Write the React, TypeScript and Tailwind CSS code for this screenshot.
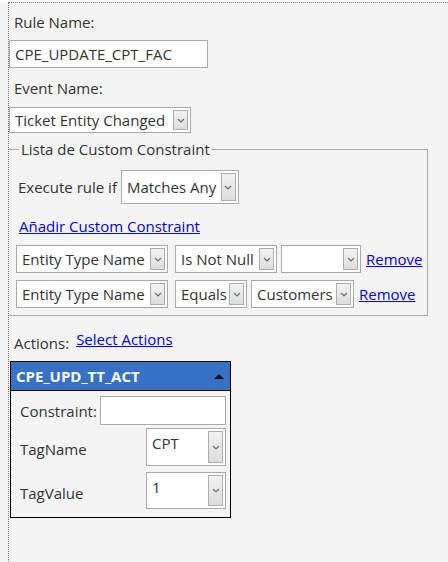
import type { ReactNode } from "react";

// small chevron used inside the fake select boxes
function Chevron() {
  return (
    <svg width="8" height="5" viewBox="0 0 8 5" className="block">
      <polyline points="1,1 4,4 7,1" fill="none" stroke="#6b6b6b" strokeWidth="1.2" />
    </svg>
  );
}

function Select({ value, className, top }: { value: string; className: string; top?: boolean }) {
  return (
    <div className={`flex bg-white border border-[#a9a9a9] ${className}`}>
      <div className={`flex-1 pl-[5px] text-[#333] whitespace-nowrap overflow-hidden flex ${top ? "items-start pt-[4px]" : "items-center"}`}>
        {value}
      </div>
      <div className="p-[2px] flex">
        <div className="w-[15px] border border-[#adadad] bg-gradient-to-b from-[#f2f2f2] to-[#dddddd] flex items-center justify-center">
          <Chevron />
        </div>
      </div>
    </div>
  );
}

function Link({ children, className = "" }: { children: ReactNode; className?: string }) {
  return <a className={`text-[#0000ee] underline cursor-pointer ${className}`}>{children}</a>;
}

export default function App() {
  return (
    <div className="min-h-screen w-full bg-[#f4f4f4] text-[15px] leading-[20px] text-[#333] font-['Open_Sans','Noto_Sans',sans-serif]">
      <div className="ml-2 mt-[2px] border-l border-t border-dotted border-[#7a7a7a] min-h-[560px] pt-[9px]">
        <div className="pl-[5px]">Rule Name:</div>
        <div className="mt-[8px] h-[28px] w-[199px] bg-white border border-[#a9a9a9] flex items-center pl-[5px]">
          CPE_UPDATE_CPT_FAC
        </div>
        <div className="mt-[10px] pl-[5px]">Event Name:</div>
        <Select value="Ticket Entity Changed" className="mt-[9px] h-[26px] w-[182px]" />

        <fieldset className="mt-[6px] w-[419px] border border-l-0 border-[#aaa] pb-[7px]">
          <legend className="ml-[10px] px-[2px]">Lista de Custom Constraint</legend>
          <div className="pt-[11px] pl-[9px] flex items-center gap-[4px]">
            <span>Execute rule if</span>
            <Select value="Matches Any" className="h-[34px] w-[118px]" />
          </div>
          <div className="mt-[12px] pl-[10px]">
            <Link>Añadir Custom Constraint</Link>
          </div>
          <div className="mt-[9px] pl-[7px] flex items-center">
            <Select value="Entity Type Name" className="h-[28px] w-[152px]" />
            <Select value="Is Not Null" className="ml-[7px] h-[28px] w-[102px]" />
            <Select value="" className="ml-[4px] h-[28px] w-[80px]" />
            <Link className="ml-[5px]">Remove</Link>
          </div>
          <div className="mt-[7px] pl-[7px] flex items-center">
            <Select value="Entity Type Name" className="h-[28px] w-[152px]" />
            <Select value="Equals" className="ml-[7px] h-[28px] w-[72px]" />
            <Select value="Customers" className="ml-[4px] h-[28px] w-[103px]" />
            <Link className="ml-[5px]">Remove</Link>
          </div>
        </fieldset>

        <div className="mt-[16px] pl-[5px] flex items-start gap-[7px]">
          <span className="pt-[1px]">Actions:</span>
          <span className="-mt-[3px]">
            <Link>Select Actions</Link>
          </span>
        </div>

        <div className="mt-[8px] ml-px w-[221px] border border-black bg-[#f4f4f4]">
          <div className="h-[29px] bg-[#3571c5] border-b border-black flex items-center justify-between pl-[5px] pr-[6px]">
            <span className="text-white font-bold">CPE_UPD_TT_ACT</span>
            <svg width="10" height="5" viewBox="0 0 10 5">
              <polygon points="0,5 5,0 10,5" fill="#111" />
            </svg>
          </div>
          <div className="pt-[5px] pb-[8px] pl-[9px] pr-[4px]">
            <div className="flex items-center justify-between">
              <span>Constraint:</span>
              <div className="h-[29px] w-[126px] bg-white border border-[#a9a9a9]" />
            </div>
            <div className="mt-[3px] flex items-center justify-between">
              <span className="mt-[4px]">TagName</span>
              <Select value="CPT" top className="h-[38px] w-[80px]" />
            </div>
            <div className="mt-[6px] flex items-center justify-between">
              <span className="mt-[4px]">TagValue</span>
              <Select value="1" top className="h-[37px] w-[80px]" />
            </div>
          </div>
        </div>
      </div>
    </div>
  );
}
